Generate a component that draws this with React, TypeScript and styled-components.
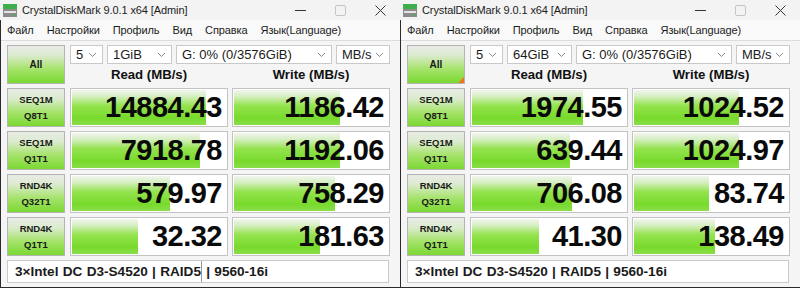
import React from 'react';
import styled, { createGlobalStyle } from 'styled-components';

const GlobalStyle = createGlobalStyle`
    html, body {
        margin: 0;
        padding: 0;
        background: #f3f3f3;
    }
    body {
        font-family: "Liberation Sans", Arial, sans-serif;
        color: #1a1a1a;
    }
`;

interface IRow {
    name: string;
    sub: string;
    read: string;
    write: string;
    readPct: number;
    writePct: number;
}

interface IWin {
    size: string;
    marked?: boolean;
    rows: IRow[];
    note: string[];
}

const windows: IWin[] = [
    {
        size: '1GiB',
        rows: [
            { name: 'SEQ1M', sub: 'Q8T1', read: '14884.43', write: '1186.42', readPct: 86, writePct: 68 },
            { name: 'SEQ1M', sub: 'Q1T1', read: '7918.78', write: '1192.06', readPct: 82, writePct: 68 },
            { name: 'RND4K', sub: 'Q32T1', read: '579.97', write: '758.29', readPct: 63, writePct: 65 },
            { name: 'RND4K', sub: 'Q1T1', read: '32.32', write: '181.63', readPct: 42, writePct: 55 },
        ],
        note: ['3×Intel DC D3-S4520 | RAID5', ' | 9560-16i'],
    },
    {
        size: '64GiB',
        marked: true,
        rows: [
            { name: 'SEQ1M', sub: 'Q8T1', read: '1974.55', write: '1024.52', readPct: 71, writePct: 67 },
            { name: 'SEQ1M', sub: 'Q1T1', read: '639.44', write: '1024.97', readPct: 63, writePct: 67 },
            { name: 'RND4K', sub: 'Q32T1', read: '706.08', write: '83.74', readPct: 64, writePct: 48 },
            { name: 'RND4K', sub: 'Q1T1', read: '41.30', write: '138.49', readPct: 43, writePct: 52 },
        ],
        note: ['3×Intel DC D3-S4520 | RAID5 | 9560-16i'],
    },
];

const menu = ['Файл', 'Настройки', 'Профиль', 'Вид', 'Справка', 'Язык(Language)'];

const Screen = styled.div`
    display: flex;
    width: 800px;
    height: 288px;
    overflow: hidden;
    background: #f3f3f3;
`;

const Window = styled.div`
    width: 400px;
    display: flex;
    flex-direction: column;
`;

const TitleBar = styled.div`
    height: 20px;
    display: flex;
    align-items: center;
    background: #f3f3f3;
    padding-left: 3px;
    font-size: 11px;
    letter-spacing: -0.1px;
    color: #1b1b1b;
`;

const TitleText = styled.span`
    margin-left: 5px;
    flex: 1;
    white-space: nowrap;
`;

const Controls = styled.div`
    display: flex;
    align-items: center;
    height: 20px;
`;

const CtrlBtn = styled.div`
    width: 40px;
    height: 20px;
    display: flex;
    align-items: center;
    justify-content: center;
`;

const Client = styled.div`
    flex: 1;
    display: flex;
    flex-direction: column;
    border-left: 1px solid #2b2b2b;
    border-bottom: 1px solid #2b2b2b;
    margin-bottom: 2px;
`;

const MenuBar = styled.div`
    height: 20px;
    display: flex;
    align-items: center;
    gap: 13px;
    padding-left: 6px;
    background: #f9f9f9;
    border-bottom: 1px solid #dcdcdc;
    font-size: 11px;
    letter-spacing: -0.1px;
    color: #1b1b1b;
`;

const Body = styled.div`
    display: grid;
    grid-template-columns: 59px 158px 158px;
    grid-template-rows: 39px repeat(4, 39px) 23px;
    column-gap: 4px;
    row-gap: 4px;
    padding: 4px 0 4px 6px;
    background: #f5f5f5;
    flex: 1;
`;

const GreenButton = styled.div<{ $marked?: boolean }>`
    position: relative;
    box-sizing: border-box;
    border: 1px solid #b4b4b4;
    background: linear-gradient(#e9ebe6 0%, #dcebd0 25%, #a6e36c 62%, #7bd832 100%);
    display: flex;
    flex-direction: column;
    align-items: center;
    justify-content: center;
    font-weight: 700;
    color: #1a1a1a;
    margin-right: 1px;
    &::after {
        content: '';
        display: ${p => (p.$marked ? 'block' : 'none')};
        position: absolute;
        right: 0;
        bottom: 0;
        border-style: solid;
        border-width: 0 0 6px 6px;
        border-color: transparent transparent #f07818 transparent;
    }
`;

const AllLabel = styled.span`
    font-size: 10px;
`;

const TestLabel = styled.span`
    font-size: 9.5px;
    line-height: 16px;
`;

const TopRight = styled.div`
    grid-column: 2 / 4;
    display: flex;
    flex-direction: column;
`;

const ComboRow = styled.div`
    display: flex;
    gap: 4px;
    height: 19px;
`;

const Combo = styled.div<{ $w: number }>`
    width: ${p => p.$w}px;
    box-sizing: border-box;
    border: 1px solid #c9c9c9;
    background: #ffffff;
    display: flex;
    align-items: center;
    justify-content: space-between;
    padding: 0 5px 0 5px;
    font-size: 13px;
    color: #1b1b1b;
`;

const Headers = styled.div`
    flex: 1;
    display: grid;
    grid-template-columns: 158px 158px;
    column-gap: 4px;
    align-items: end;
`;

const Header = styled.div`
    text-align: center;
    font-weight: 700;
    font-size: 13.2px;
    line-height: 18px;
    color: #111;
`;

const Cell = styled.div`
    position: relative;
    box-sizing: border-box;
    border: 1px solid #c3c3c3;
    background: #ffffff;
    display: flex;
    align-items: center;
    justify-content: flex-end;
    padding-right: 5px;
    overflow: hidden;
`;

const Fill = styled.div`
    position: absolute;
    left: 1px;
    top: 1px;
    bottom: 1px;
    background: linear-gradient(#f2f5ef 0%, #d6efc2 18%, #94e34e 45%, #78da2c 80%, #8ade4a 100%);
`;

const Value = styled.span`
    position: relative;
    font-weight: 700;
    font-size: 29px;
    letter-spacing: -0.5px;
    color: #0a0a0a;
    line-height: 1;
`;

const Note = styled.div`
    grid-column: 1 / 4;
    box-sizing: border-box;
    border: 1px solid #c9c9c9;
    background: #ffffff;
    display: flex;
    align-items: center;
    padding-left: 7px;
    font-weight: 700;
    font-size: 13.6px;
    word-spacing: 0.5px;
    color: #1a1a1a;
    margin-right: 1px;
    white-space: pre;
`;

const NotePart = styled.span<{ $cut?: boolean }>`
    align-self: stretch;
    display: flex;
    align-items: center;
    border-right: ${p => (p.$cut ? '1px solid #9a9a9a' : 'none')};
`;

const AppIcon = () => (
    <svg width="14" height="13" viewBox="0 0 14 13">
        <rect x="0" y="0" width="14" height="5" fill="#3db04a" />
        <rect x="0" y="5" width="14" height="8" fill="#8c8c8c" />
        <rect x="1" y="7" width="12" height="2" fill="#e4e4e4" />
        <rect x="10" y="10" width="2" height="1.5" fill="#3db04a" />
    </svg>
);

const Chevron = () => (
    <svg width="9" height="6" viewBox="0 0 9 6">
        <path d="M1 1 L4.5 4.5 L8 1" fill="none" stroke="#8a8a8a" strokeWidth="1" />
    </svg>
);

const WindowControls = () => (
    <Controls>
        <CtrlBtn>
            <svg width="11" height="11" viewBox="0 0 11 11">
                <path d="M0 5.5 H11" stroke="#333" strokeWidth="1" />
            </svg>
        </CtrlBtn>
        <CtrlBtn>
            <svg width="11" height="11" viewBox="0 0 11 11">
                <rect x="0.5" y="0.5" width="10" height="10" rx="1.5" fill="none" stroke="#c4c4c4" />
            </svg>
        </CtrlBtn>
        <CtrlBtn>
            <svg width="11" height="11" viewBox="0 0 11 11">
                <path d="M0.5 0.5 L10.5 10.5 M10.5 0.5 L0.5 10.5" stroke="#333" strokeWidth="1" />
            </svg>
        </CtrlBtn>
    </Controls>
);

const DiskMark = ({ win }: { win: IWin }) => (
    <Window>
        <TitleBar>
            <AppIcon />
            <TitleText>CrystalDiskMark 9.0.1 x64 [Admin]</TitleText>
            <WindowControls />
        </TitleBar>
        <Client>
            <MenuBar>
                {menu.map(m => <span key={m}>{m}</span>)}
            </MenuBar>
            <Body>
                <GreenButton $marked={win.marked}>
                    <AllLabel>All</AllLabel>
                </GreenButton>
                <TopRight>
                    <ComboRow>
                        <Combo $w={33}>5<Chevron /></Combo>
                        <Combo $w={65}>{win.size}<Chevron /></Combo>
                        <Combo $w={156}>G: 0% (0/3576GiB)<Chevron /></Combo>
                        <Combo $w={54}>MB/s<Chevron /></Combo>
                    </ComboRow>
                    <Headers>
                        <Header>Read (MB/s)</Header>
                        <Header>Write (MB/s)</Header>
                    </Headers>
                </TopRight>
                {win.rows.map((r, i) => (
                    <React.Fragment key={i}>
                        <GreenButton>
                            <TestLabel>{r.name}</TestLabel>
                            <TestLabel>{r.sub}</TestLabel>
                        </GreenButton>
                        <Cell>
                            <Fill style={{ width: `${r.readPct}%` }} />
                            <Value>{r.read}</Value>
                        </Cell>
                        <Cell>
                            <Fill style={{ width: `${r.writePct}%` }} />
                            <Value>{r.write}</Value>
                        </Cell>
                    </React.Fragment>
                ))}
                <Note>
                    {win.note.map((t, i) => (
                        <NotePart key={i} $cut={i < win.note.length - 1}>{t}</NotePart>
                    ))}
                </Note>
            </Body>
        </Client>
    </Window>
);

export default function App() {
    return (
        <>
            <GlobalStyle />
            <Screen>
                {windows.map((w, i) => <DiskMark key={i} win={w} />)}
            </Screen>
        </>
    );
}
